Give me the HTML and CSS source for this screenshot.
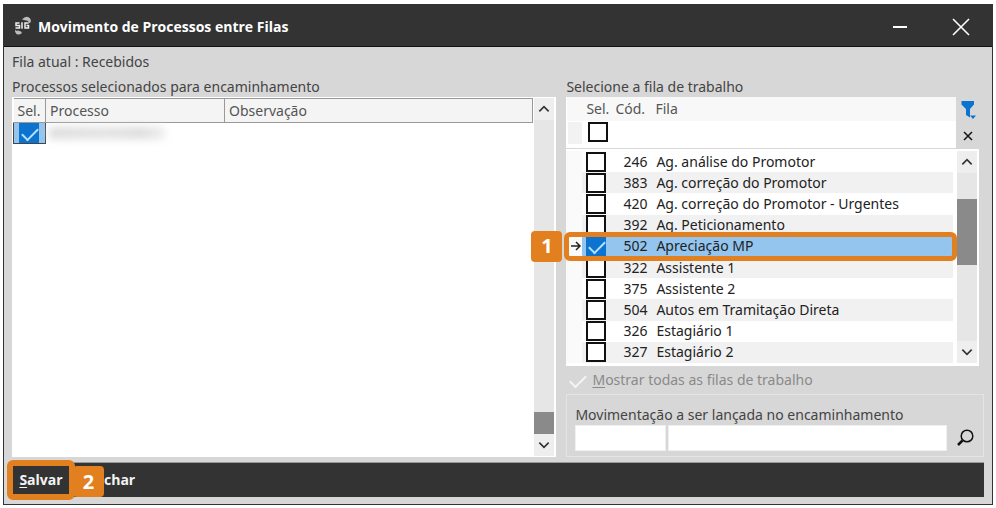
FILE: index.html
```html
<!DOCTYPE html>
<html lang="pt-BR">
<head>
<meta charset="utf-8">
<title>Movimento de Processos entre Filas</title>
<link rel="stylesheet" href="styles.css">
</head>
<body>
<main class="window">
  <header class="titlebar">
    <svg class="logo" viewBox="0 0 20 20" aria-hidden="true">
      <path d="M9 3.500Q12 0 15 1Q19 3 17.500 6.500L15.500 7.500Q16 4.500 13 4.500Z" fill="#bbb"/>
      <path d="M6.500 7H3v2.500h3.500V12H2.500M9 6.300v6.400M15.500 7H12v5h3.500V9.500h-2" fill="none" stroke="#eee" stroke-width="1.500"/>
      <path d="M2 13.500Q3 15.500 5 14.500L8 15.500 9 17Q6 19.500 3.500 18Q1.500 16 2 13.500Z" fill="#bbb"/>
    </svg>
    <h1>Movimento de Processos entre Filas</h1>
    <button class="winbtn" aria-label="Minimizar"><svg viewBox="0 0 20 20"><path d="M3 11h14" stroke-width="2"/></svg></button>
    <button class="winbtn close" aria-label="Fechar janela"><svg viewBox="0 0 20 20"><path d="M2 3l16 16M18 3L2 19" stroke-width="1.600"/></svg></button>
  </header>
  <p class="current">Fila atual : Recebidos</p>
  <div class="columns">
    <section class="column">
      <h2>Processos selecionados para encaminhamento</h2>
      <div class="panel processes">
        <table class="process-table">
          <thead><tr><th class="c-sel">Sel.</th><th class="c-proc">Processo</th><th>Observação</th></tr></thead>
          <tbody><tr><td class="picked"><input class="check" type="checkbox" checked aria-label="Selecionar processo"></td><td><div class="redacted"></div></td><td></td></tr></tbody>
        </table>
        <div class="scroll">
          <button aria-label="Rolar para cima"><svg viewBox="0 0 12 12"><path d="M2 8l4-4 4 4"/></svg></button>
          <div class="thumb thumb-end"></div>
          <button aria-label="Rolar para baixo"><svg viewBox="0 0 12 12"><path d="M2 4l4 4 4-4"/></svg></button>
        </div>
      </div>
    </section>
    <section class="column">
      <h2>Selecione a fila de trabalho</h2>
      <div class="filter">
        <table class="queue-table filter-table">
          <thead><tr><th class="c-mark"></th><th class="c-box">Sel.</th><th class="c-code">Cód.</th><th class="c-name">Fila</th></tr></thead>
          <tbody><tr><td class="marker"></td><td class="box"><input class="check" type="checkbox" aria-label="Filtrar selecionadas"></td><td></td><td></td></tr></tbody>
        </table>
        <div class="filter-tools">
          <button aria-label="Filtrar"><svg class="funnel" viewBox="0 0 16 20"><path d="M1 1h12.500v3.500L9.500 9v8.500L5.500 15V9L1 4.500z"/><path d="M9.500 15.500h6l-3 3.500z"/></svg></button>
          <button aria-label="Limpar filtro"><svg class="clear" viewBox="0 0 10 10"><path d="M1 1l8 8M9 1L1 9"/></svg></button>
        </div>
      </div>
      <div class="panel queues">
        <table class="queue-table queue-list">
          <colgroup><col class="c-mark"><col class="c-box"><col class="c-code"><col></colgroup>
          <tbody>
          <tr><td></td><td class="box"><input class="check" type="checkbox" aria-label="246"></td><td class="code">246</td><td>Ag. análise do Promotor</td></tr>
          <tr><td></td><td class="box"><input class="check" type="checkbox" aria-label="383"></td><td class="code">383</td><td>Ag. correção do Promotor</td></tr>
          <tr><td></td><td class="box"><input class="check" type="checkbox" aria-label="420"></td><td class="code">420</td><td>Ag. correção do Promotor - Urgentes</td></tr>
          <tr><td></td><td class="box"><input class="check" type="checkbox" aria-label="392"></td><td class="code">392</td><td>Ag. Peticionamento</td></tr>
          <tr class="active"><td><svg class="arrow" viewBox="0 0 12 12"><path d="M1 6h9M6 2l4 4-4 4"/></svg><span class="step step-one">1</span></td><td class="box"><input class="check" type="checkbox" checked aria-label="502"></td><td class="code">502</td><td>Apreciação MP</td></tr>
          <tr><td></td><td class="box"><input class="check" type="checkbox" aria-label="322"></td><td class="code">322</td><td>Assistente 1</td></tr>
          <tr><td></td><td class="box"><input class="check" type="checkbox" aria-label="375"></td><td class="code">375</td><td>Assistente 2</td></tr>
          <tr><td></td><td class="box"><input class="check" type="checkbox" aria-label="504"></td><td class="code">504</td><td>Autos em Tramitação Direta</td></tr>
          <tr><td></td><td class="box"><input class="check" type="checkbox" aria-label="326"></td><td class="code">326</td><td>Estagiário 1</td></tr>
          <tr><td></td><td class="box"><input class="check" type="checkbox" aria-label="327"></td><td class="code">327</td><td>Estagiário 2</td></tr>
          </tbody>
        </table>
        <div class="scroll">
          <button aria-label="Rolar para cima"><svg viewBox="0 0 12 12"><path d="M2 8l4-4 4 4"/></svg></button>
          <div class="thumb thumb-mid"></div>
          <button aria-label="Rolar para baixo"><svg viewBox="0 0 12 12"><path d="M2 4l4 4 4-4"/></svg></button>
        </div>
      </div>
      <label class="show-all"><input type="checkbox" checked disabled><span><u>M</u>ostrar todas as filas de trabalho</span></label>
      <div class="movement">
        <label for="mov-code">Movimentação a ser lançada no encaminhamento</label>
        <div class="movement-row">
          <input id="mov-code" class="mov-code" type="text">
          <input class="mov-name" type="text" aria-label="Descrição da movimentação">
          <button aria-label="Pesquisar"><svg viewBox="0 0 18 18"><circle cx="11" cy="7" r="5.800"/><path d="M6.500 11.500L2 16" stroke-width="2.500"/></svg></button>
        </div>
      </div>
    </section>
  </div>
  <footer class="actions">
    <button class="save"><u>S</u>alvar</button>
    <span class="step step-two">2</span>
    <button class="shut">char</button>
  </footer>
</main>
</body>
</html>
```

FILE: styles.css
```css
* { box-sizing: border-box; }

body {
  margin: 0;
  padding: 4px 3px 3px;
  background: #fff;
  color: #444;
  font: 14px/20px "Noto Sans", "Open Sans", sans-serif;
}

h1, h2, p { margin: 0; font-size: 14px; font-weight: 400; }

button {
  display: flex;
  align-items: center;
  justify-content: center;
  padding: 0;
  border: 0;
  background: none;
  color: inherit;
  font: inherit;
}

svg { display: block; fill: none; stroke: currentColor; }

table { border-collapse: collapse; border-spacing: 0; table-layout: fixed; }
th, td { padding: 0; font-weight: 400; text-align: left; white-space: nowrap; }

.window { border: 1px solid #333; background: #d7d7d7; }

.titlebar {
  display: flex;
  align-items: center;
  height: 42px;
  padding: 0 21px 0 9px;
  border-bottom: 1px solid #111;
  background: #333;
  color: #fff;
}
.titlebar h1 { flex: 1; padding-top: 2px; font-weight: 700; font-family: "Open Sans", sans-serif; }
.logo { width: 20px; height: 20px; margin-right: 5px; stroke: none; }
.winbtn svg { width: 20px; height: 20px; }
.close { margin-left: 41px; }

.current { padding: 5px 8px; }

.columns {
  display: grid;
  grid-template-columns: minmax(0, 545fr) minmax(0, 418fr);
  gap: 10px;
  padding: 0 8px;
}
.column { display: flex; flex-direction: column; }

.panel { display: flex; background: #fff; }

.processes { flex: 1; padding: 1px 2px 1px 1px; }
.process-table { flex: 1; align-self: flex-start; }
.process-table th {
  height: 24px;
  padding-left: 4px;
  border: 1px solid #999;
  background: #f4f4f4;
  color: #555;
}
.process-table .c-sel { width: 32px; border-left: 0; }
.process-table .c-proc { width: 179px; }
.picked { height: 21px; padding: 0 5px; border: 1px solid #444; background: #93c5ef; }
.redacted {
  width: 116px;
  height: 12px;
  margin-left: 3px;
  background: linear-gradient(90deg, #dcdcdc, #e2e2e2 50%, #dcdcdc 80%, #eee);
  filter: blur(4px);
}

.check {
  display: block;
  width: 20px;
  height: 20px;
  margin: 0;
  border: 2px solid #111;
  background: #fff;
  appearance: none;
}
.check:checked {
  border: 0;
  background: #0c73cf;
}
.check:checked::after, .show-all input::after {
  content: "";
  display: block;
  width: 14px;
  height: 7px;
  margin: 5px 0 0 3px;
  border: solid #b8e0ff;
  border-width: 0 0 2px 2px;
  transform: rotate(-45deg);
}

.scroll {
  display: flex;
  flex-direction: column;
  width: 20px;
  margin-left: 1px;
  background: #e6e6e6;
}
.scroll button { height: 22px; background: #eee; }
.scroll svg { width: 14px; height: 14px; stroke: #333; stroke-width: 1.4; }
.thumb { background: #8a8a8a; }
.thumb-end { height: 22px; margin-top: auto; }
.thumb-mid { height: 66px; margin: 26px 0 auto; }

.filter { display: flex; height: 49px; margin-bottom: 3px; }
.filter-table { flex: 1; align-self: stretch; background: #fff; }
.filter-table th { height: 24px; background: #f8f8f8; color: #555; }
.filter-table td { height: 25px; padding-bottom: 4px; }
.filter-table .c-box { padding-left: 3px; }
.filter-table .c-name { padding-left: 6px; }
.filter-table .marker { background: #f2f2f2; border: solid #fff; border-width: 1px 2px 4px 2px; }
.c-mark { width: 16px; }
.c-box { width: 32px; }
.c-code { width: 34px; }
.filter-tools {
  display: flex;
  flex-direction: column;
  justify-content: space-between;
  width: 28px;
  padding: 3px 4px 3px 0;
}
.funnel { width: 17px; height: 20px; fill: #0c73cf; stroke: none; }
.clear { width: 10px; height: 14px; stroke: #111; stroke-width: 1.5; }

.queues { margin-right: 5px; padding: 2px 2px 3px 0; }
.queue-list { flex: 1; height: 212px; margin-right: 3px; color: #222; }
.queue-list td:first-child { background: #fafafa; }
.queue-list tr:nth-child(even) td:not(:first-child) { background: #f1f1f1; }
.queue-table .box { padding-left: 4px; }
.queue-list .code { padding-right: 1px; text-align: right; }
.queue-list td:last-child { padding-left: 8px; }
.queue-list .active { position: relative; }
.queue-list .active td:not(:first-child) { background: #93c5ef; }
.active::after {
  content: "";
  position: absolute;
  inset: -4px -4px -4px -2px;
  border: 5px solid #e27f1e;
  border-radius: 6px;
}
.arrow { width: 12px; height: 12px; margin-left: 4px; stroke: #222; stroke-width: 1.5; }

.step {
  display: flex;
  align-items: center;
  justify-content: center;
  width: 31px;
  height: 31px;
  border-radius: 4px;
  background: #e27f1e;
  color: #fff;
  font: 700 20px/24px "Open Sans", sans-serif;
}
.step-one { position: absolute; top: -5px; left: -35px; }

.show-all { display: flex; align-items: center; height: 28px; padding-left: 2px; color: #8a8a8a; }
.show-all input { width: 20px; height: 20px; margin: 0 4px 0 0; appearance: none; }
.show-all input::after { margin-left: 2px; border-color: #f4f4f4; }
u { text-underline-offset: 2px; }

.movement { padding: 10px 0 5px 8px; border: 1px solid #e4e4e4; }
.movement label { display: block; }
.movement-row { display: flex; }
.movement input { min-width: 0; height: 26px; border: 1px solid #f0f0f0; background: #fff; }
.mov-code { flex: 87; margin-right: 2px; }
.mov-name { flex: 283; }
.movement button { width: 36px; }
.movement svg { width: 18px; height: 18px; stroke: #111; stroke-width: 1.5; }

.actions {
  position: relative;
  display: flex;
  align-items: center;
  height: 34px;
  margin: 6px 8px 7px;
  background: #333;
  box-shadow: 0 -1px #999;
  color: #f4f4f4;
  font: 700 14px/20px "Open Sans", sans-serif;
}
.save {
  width: 68px;
  height: 40px;
  margin-left: -5px;
  border: 6px solid #e27f1e;
  border-radius: 6px;
}
.step-two { position: absolute; top: 3px; left: 61px; }
.shut { margin-left: 29px; }
```
